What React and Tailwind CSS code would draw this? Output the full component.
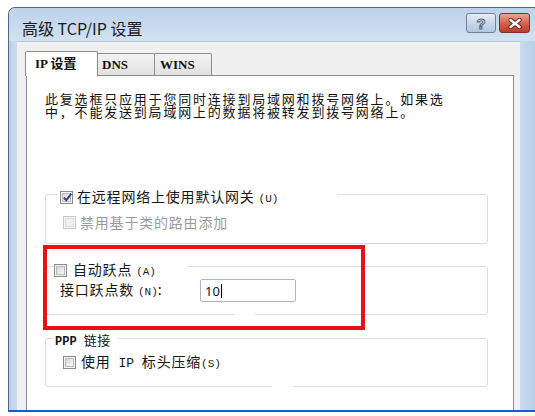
import React from "react";

const CJK = "font-['Noto_Sans_CJK_SC','Noto_Sans',sans-serif]";

function Check({ checked = false, disabled = false }) {
  return (
    <span
      className={
        disabled
          ? "inline-flex shrink-0 w-[13px] h-[13px] border border-[#c9c9c9] bg-[#f6f6f6] items-center justify-center"
          : "inline-flex shrink-0 w-[13px] h-[13px] border border-[#8a8b8c] bg-[#f4f4f4] items-center justify-center"
      }
    >
      <span
        className={
          disabled
            ? "w-[9px] h-[9px] border border-[#dedede] bg-[#f0f0f0]"
            : "relative w-[9px] h-[9px] border border-[#b9bcc2] bg-gradient-to-br from-[#d4d6da] to-[#f7f7f8]"
        }
      >
        {checked && (
          <svg className="absolute -left-[1px] -top-[2px]" width="11" height="11" viewBox="0 0 11 11">
            <path d="M1.8 5.6 L4.3 8.2 L9.2 1.8" fill="none" stroke="#28418a" strokeWidth="1.9" />
          </svg>
        )}
      </span>
    </span>
  );
}

function Acc({ children }) {
  return (
    <span className="font-['Liberation_Mono',monospace] text-[11px] tracking-normal text-[#1a1a1a]">{children}</span>
  );
}

export default function App() {
  return (
    <div className={`w-[535px] h-[416px] bg-white overflow-hidden ${CJK}`}>
      <div className="ml-[8px] mt-[7px] w-[527px] h-[405px] flex flex-col rounded-tl-[7px] border-l border-t border-[#55667c] border-b-2 border-b-[#1e58d2] bg-[#c3d7ee]">
        {/* title bar */}
        <div className="h-[33px] flex items-start justify-between bg-gradient-to-b from-[#bcd2ea] to-[#d3e2f3] rounded-tl-[6px]">
          <div className="pl-[13px] pt-[10px] text-[16px] leading-[20px] text-[#1a1a1a] whitespace-nowrap">
            高级 TCP/IP 设置
          </div>
          <div className="flex pt-[5px] pr-[5px] gap-[3px]">
            <div className="w-[30px] h-[20px] rounded-[3px] border border-[#6e819c] bg-gradient-to-b from-[#e6eef7] via-[#c9d8ea] to-[#b2c7df] flex items-center justify-center">
              <span className="font-['Liberation_Sans',sans-serif] font-bold text-[15px] leading-none text-[#eef3f9] [-webkit-text-stroke:1px_#55657e]">?</span>
            </div>
            <div className="w-[31px] h-[20px] rounded-[3px] border border-[#7b3329] bg-gradient-to-b from-[#e7a698] via-[#d26550] to-[#bb3d27] flex items-center justify-center">
              <svg width="14" height="11" viewBox="0 0 14 11">
                <path d="M2.5 2 L11.5 9 M11.5 2 L2.5 9" stroke="#6a2318" strokeWidth="4.2" strokeLinecap="round" />
                <path d="M2.5 2 L11.5 9 M11.5 2 L2.5 9" stroke="#ffffff" strokeWidth="2.4" strokeLinecap="round" />
              </svg>
            </div>
          </div>
        </div>

        {/* body */}
        <div className="flex flex-1 min-h-0">
          <div className="w-[8px] bg-gradient-to-r from-[#bcd2eb] to-[#cadcf0]" />
          <div className="flex-1 flex flex-col bg-[#f0f0f0] border-t border-[#b4c6da] pl-[9px] pr-[6px] pt-[9px]">
            {/* tabs */}
            <div className="relative z-10 h-[25px] -mb-[1px] flex items-end font-['Liberation_Serif','Noto_Sans_CJK_SC',serif] font-bold text-[13px] text-[#111]">
              <div className="relative z-10 -ml-[1px] w-[73px] h-[25px] bg-white border border-b-0 border-[#898c95] rounded-t-[2px] pl-[9px] pt-[3px] leading-[18px] whitespace-nowrap">
                IP 设置
              </div>
              <div className="-ml-[1px] mb-[1px] w-[58px] h-[22px] bg-gradient-to-b from-[#f3f3f3] to-[#e1e1e1] border border-b-0 border-[#8e8f91] rounded-t-[2px] pl-[4px] pt-[2px] leading-[18px]">
                DNS
              </div>
              <div className="-ml-[1px] mb-[1px] w-[58px] h-[22px] bg-gradient-to-b from-[#f3f3f3] to-[#e1e1e1] border border-b-0 border-[#8e8f91] rounded-t-[2px] pl-[5px] pt-[2px] leading-[18px]">
                WINS
              </div>
            </div>

            {/* panel */}
            <div className="relative flex-1 w-[488px] bg-white border border-b-0 border-[#898c95] pl-[18px] pt-[16px] text-[14px] tracking-[0.8px] text-[#161616]">
              <p className="text-[13px] tracking-[1.8px] leading-[13px] whitespace-nowrap text-[#111]">
                此复选框只应用于您同时连接到局域网和拨号网络上。如果选
                <br />
                中，不能发送到局域网上的数据将被转发到拨号网络上。
              </p>

              {/* group 1 */}
              <div className="relative mt-[76px] w-[443px] h-[50px] border border-[#d6dde4] rounded-[3px] pl-[17px] pt-[19px]">
                <div className="absolute left-[12px] -top-[6px] w-[279px] h-[16px] bg-white pl-[2px] flex items-center gap-[4px] leading-[16px] whitespace-nowrap">
                  <Check checked />
                  <span>
                    在远程网络上使用默认网关 <Acc>(U)</Acc>
                  </span>
                </div>
                <div className="h-[16px] flex items-center gap-[4px] leading-[16px] text-[#9a9a9a] whitespace-nowrap">
                  <Check disabled />
                  <span>禁用基于类的路由添加</span>
                </div>
              </div>

              {/* group 2 */}
              <div className="relative mt-[22px] w-[443px] h-[49px] border border-[#d6dde4] rounded-[3px] pl-[14px] pt-[12px]">
                <div className="absolute left-[7px] -top-[5px] w-[135px] h-[16px] bg-white pl-[1px] flex items-center gap-[6px] leading-[16px] whitespace-nowrap">
                  <Check />
                  <span>
                    自动跃点 <Acc>(A)</Acc>
                  </span>
                </div>
                <div className="flex items-center h-[23px] whitespace-nowrap leading-[16px]">
                  <span className="w-[140px]">
                    接口跃点数 <Acc>(N)</Acc>:
                  </span>
                  <div className="w-[96px] h-[23px] border border-[#a9b8cc] rounded-[2px] bg-white flex items-center pl-[4px] font-['Noto_Sans',sans-serif] text-[13px] tracking-normal">
                    10<span className="ml-[1px] w-[1px] h-[14px] bg-black" />
                  </div>
                </div>
                <span className="absolute left-[189px] -bottom-[1px] w-[20px] h-[1px] bg-white" />
              </div>

              {/* group 3 */}
              <div className="relative mt-[23px] w-[443px] h-[49px] border border-[#d6dde4] rounded-[3px] pl-[17px] pt-[15px]">
                <div className="absolute left-[7px] -top-[8px] w-[65px] h-[16px] bg-white pl-[2px] leading-[16px] whitespace-nowrap">
                  <span className="font-['Liberation_Mono',monospace] font-bold text-[12px] tracking-normal">PPP </span>
                  <span className="text-[13px] tracking-[0.5px]">链接</span>
                </div>
                <div className="h-[16px] flex items-center gap-[5px] leading-[16px] whitespace-nowrap">
                  <Check />
                  <span>
                    使用<span className="font-['Liberation_Mono',monospace] text-[13px] tracking-normal"> IP </span>标头压缩<Acc>(S)</Acc>
                  </span>
                </div>
                <span className="absolute left-[226px] -bottom-[1px] w-[21px] h-[1px] bg-white" />
              </div>

              {/* red annotation box */}
              <div className="absolute left-[16px] top-[169px] w-[322px] h-[85px] border-[4px] border-[#e8101a]" />
            </div>
          </div>
          <div className="w-[15px] bg-gradient-to-r from-[#c8dbf0] to-[#b7cfea]" />
        </div>
      </div>
    </div>
  );
}
